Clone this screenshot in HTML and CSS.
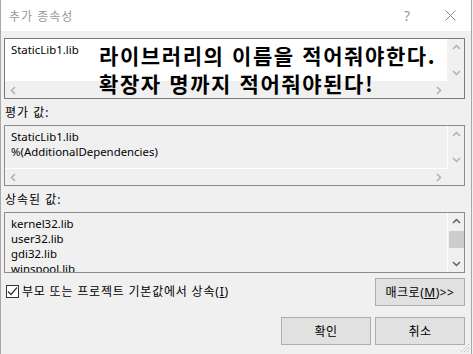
FILE: index.html
```html
<!DOCTYPE html>
<html lang="ko">
<head>
  <meta charset="UTF-8">
  <meta name="viewport" content="width=device-width, initial-scale=1.0">
  <title>추가 종속성</title>
  <link rel="stylesheet" href="styles.css">
</head>
<body>
  <div class="window">
    <div class="titlebar">
      <span class="title ko">추가 종속성</span>
      <span class="help">?</span>
      <svg class="close" width="11" height="11" viewBox="0 0 11 11">
        <path d="M0.5 0.5 L10.5 10.5 M10.5 0.5 L0.5 10.5" stroke="#8a8a8a" stroke-width="1" fill="none"/>
      </svg>
    </div>

    <div class="content">
      <!-- edit box -->
      <div class="box box-edit">
        <div class="box-text">StaticLib1.lib</div>
        <div class="vscroll">
          <svg class="arrow" width="9" height="17" viewBox="0 0 9 17"><path d="M1 10 L4.5 6.5 L8 10" class="chev off"/></svg>
          <svg class="arrow" width="9" height="17" viewBox="0 0 9 17"><path d="M1 7 L4.5 10.5 L8 7" class="chev off"/></svg>
        </div>
        <div class="hscroll">
          <svg class="arrow" width="17" height="9" viewBox="0 0 17 9"><path d="M10 1 L6.5 4.5 L10 8" class="chev off"/></svg>
          <svg class="arrow" width="17" height="9" viewBox="0 0 17 9"><path d="M7 1 L10.5 4.5 L7 8" class="chev off"/></svg>
        </div>
        <div class="corner"></div>
      </div>

      <div class="label ko">평가 값:</div>
      <div class="box box-read">
        <div class="box-text">StaticLib1.lib<br>%(AdditionalDependencies)</div>
        <div class="vscroll">
          <svg class="arrow" width="9" height="17" viewBox="0 0 9 17"><path d="M1 10 L4.5 6.5 L8 10" class="chev off"/></svg>
          <svg class="arrow" width="9" height="17" viewBox="0 0 9 17"><path d="M1 7 L4.5 10.5 L8 7" class="chev off"/></svg>
        </div>
        <div class="hscroll">
          <svg class="arrow" width="17" height="9" viewBox="0 0 17 9"><path d="M10 1 L6.5 4.5 L10 8" class="chev off"/></svg>
          <svg class="arrow" width="17" height="9" viewBox="0 0 17 9"><path d="M7 1 L10.5 4.5 L7 8" class="chev off"/></svg>
        </div>
        <div class="corner"></div>
      </div>

      <div class="label ko">상속된 값:</div>
      <div class="box box-list">
        <div class="box-text">kernel32.lib<br>user32.lib<br>gdi32.lib<br>winspool.lib</div>
        <div class="vscroll">
          <svg class="arrow" width="9" height="17" viewBox="0 0 9 17"><path d="M1 10 L4.5 6.5 L8 10" class="chev on"/></svg>
          <div class="track"><div class="thumb"></div></div>
          <svg class="arrow" width="9" height="17" viewBox="0 0 9 17"><path d="M1 7 L4.5 10.5 L8 7" class="chev on"/></svg>
        </div>
      </div>

      <div class="row">
        <label class="check">
          <span class="checkbox">
            <svg width="11" height="11" viewBox="0 0 11 11"><path d="M1 5.5 L4 8.5 L10 1.5" stroke="#333" stroke-width="1.2" fill="none"/></svg>
          </span>
          <span class="ko check-text">부모 또는 프로젝트 기본값에서 상속(<u>I</u>)</span>
        </label>
        <button class="btn">매크로(<u>M</u>)&gt;&gt;</button>
      </div>

      <div class="row row-end">
        <button class="btn">확인</button>
        <button class="btn">취소</button>
      </div>
    </div>

    <div class="note">라이브러리의 이름을 적어줘야한다.<br>확장자 명까지 적어줘야된다!</div>

    <svg class="grip" width="10" height="10" viewBox="0 0 10 10">
      <path d="M9 1 L1 9 M9 4 L4 9 M9 7 L7 9" stroke="#b5b5b5" stroke-width="1" stroke-dasharray="1 1" fill="none"/>
    </svg>
  </div>
</body>
</html>
```

FILE: styles.css
```css
body {
  margin: 0;
  font-family: "Noto Sans", "Noto Sans CJK KR", sans-serif;
  font-size: 12px;
  color: #000;
  background: #f0f0f0;
}
.window {
  position: relative;
  width: 472px;
  height: 354px;
  box-sizing: border-box;
  border-left: 1px solid #a8a8a8;
  border-right: 1px solid #a8a8a8;
  background: #f0f0f0;
  overflow: hidden;
}
.ko {
  letter-spacing: 1px;
}
.titlebar {
  height: 31px;
  background: #fff;
  display: flex;
  align-items: center;
  padding-left: 8px;
}
.title {
  flex: 1;
  color: #9a9a9a;
  font-size: 12px;
}
.help {
  color: #9a9a9a;
  font-size: 14px;
  margin-right: 35px;
}
.close {
  margin-right: 15px;
}
.content {
  padding: 7px 0 0 3px;
}
.box {
  width: 461px;
  height: 61px;
  box-sizing: border-box;
  border: 1px solid #7a7a7a;
  display: grid;
  grid-template-columns: 1fr 17px;
  grid-template-rows: 1fr 17px;
  overflow: hidden;
}
.box-edit {
  background: #fff;
}
.box-read,
.box-list {
  border-color: #8c8c8c;
  background: #f0f0f0;
}
.box-list {
  grid-template-rows: 1fr;
}
.box-text {
  padding: 3px 6px 0;
  font-size: 11.4px;
  line-height: 15px;
  overflow: hidden;
}
.vscroll {
  background: #f0f0f0;
  border-left: 1px solid #fff;
  display: flex;
  flex-direction: column;
  justify-content: space-between;
  align-items: center;
}
.box-edit .vscroll {
  border-left-color: #f0f0f0;
}
.hscroll {
  background: #f0f0f0;
  border-top: 1px solid #fff;
  display: flex;
  justify-content: space-between;
  align-items: center;
}
.box-edit .hscroll {
  border-top-color: #f0f0f0;
}
.corner {
  background: #f0f0f0;
}
.track {
  flex: 1;
  width: 100%;
  display: flex;
  justify-content: center;
}
.thumb {
  width: 15px;
  height: 17px;
  margin-top: 1px;
  background: #cdcdcd;
}
.chev {
  fill: none;
  stroke-width: 1.5;
}
.chev.off {
  stroke: #b0b0b0;
}
.chev.on {
  stroke: #606060;
}
.label {
  margin: 6px 0 4px 1px;
  line-height: 16px;
}
.row {
  width: 461px;
  display: flex;
  align-items: flex-start;
  justify-content: space-between;
  margin-top: 5px;
}
.row-end {
  justify-content: flex-end;
  gap: 4px;
  margin-top: 11px;
}
.check {
  display: flex;
  align-items: center;
  gap: 3px;
  margin: 4px 0 0 2px;
}
.check-text {
  letter-spacing: 0.8px;
}
.checkbox {
  width: 13px;
  height: 13px;
  box-sizing: border-box;
  border: 1px solid #333;
  background: #fff;
  display: flex;
  align-items: center;
  justify-content: center;
}
.btn {
  width: 90px;
  height: 28px;
  background: #e1e1e1;
  border: 1px solid #adadad;
  font-family: inherit;
  font-size: 12px;
  letter-spacing: 0.5px;
  color: #000;
  padding: 0;
}
.note {
  position: absolute;
  left: 98px;
  top: 41px;
  font-family: "Noto Sans CJK KR", sans-serif;
  font-weight: bold;
  font-size: 21px;
  letter-spacing: 1.6px;
  line-height: 28px;
  color: #000;
}
.grip {
  position: absolute;
  right: 1px;
  bottom: 1px;
}
```
